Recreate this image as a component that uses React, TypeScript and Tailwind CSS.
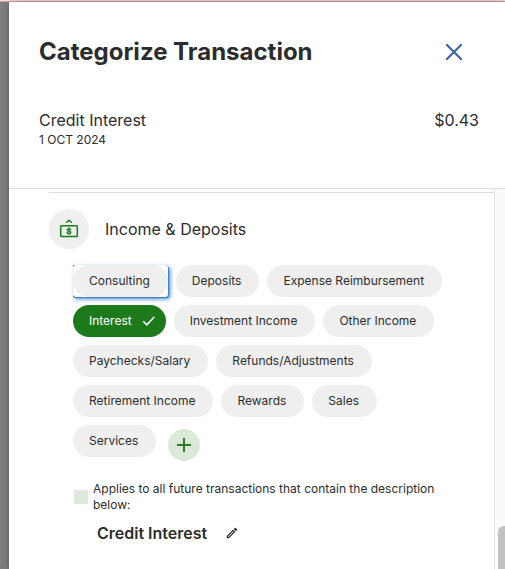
import { useState } from "react";

const categories = [
  "Consulting",
  "Deposits",
  "Expense Reimbursement",
  "Interest",
  "Investment Income",
  "Other Income",
  "Paychecks/Salary",
  "Refunds/Adjustments",
  "Retirement Income",
  "Rewards",
  "Sales",
  "Services",
];

function CloseIcon() {
  return (
    <svg width="16" height="16" viewBox="0 0 16 16" fill="none" stroke="#3c67a8" strokeWidth="2.2" strokeLinecap="round" aria-hidden="true">
      <path d="M1 1l14 14M15 1L1 15" />
    </svg>
  );
}

function IncomeIcon() {
  return (
    <svg width="20" height="20" viewBox="0 0 20 20" fill="none" stroke="#1d7a1b" strokeWidth="1.5" strokeLinecap="round" strokeLinejoin="round" aria-hidden="true">
      <path d="M7.7 3.3L10 1.2 12.3 3.3" />
      <rect x="1.7" y="6.7" width="16.6" height="10.9" rx="0.8" />
      <path d="M11.7 10.8c-.2-.6-.8-.9-1.7-.9-1 0-1.7.4-1.7 1.1 0 1.6 3.5.7 3.5 2.3 0 .7-.8 1.1-1.8 1.1s-1.7-.4-1.9-1M10 9v.8M10 14.5v.8" />
    </svg>
  );
}

function CheckIcon() {
  return (
    <svg width="14" height="12" viewBox="0 0 14 12" fill="none" stroke="#fff" strokeWidth="1.5" aria-hidden="true">
      <path d="M1.3 6.2L4.8 9.8 12.4 1.8" />
    </svg>
  );
}

function PlusIcon() {
  return (
    <svg width="14" height="14" viewBox="0 0 14 14" fill="none" stroke="#2b7d28" strokeWidth="2" aria-hidden="true">
      <path d="M7 0v14M0 7h14" />
    </svg>
  );
}

function PencilIcon() {
  return (
    <svg width="14" height="14" viewBox="0 0 24 24" fill="#2b2d2d" aria-hidden="true">
      <path d="M14.06 9.02l.92.92L5.92 19H5v-.92l9.06-9.06M17.66 3c-.25 0-.51.1-.7.29l-1.83 1.83 3.75 3.75 1.83-1.83c.39-.39.39-1.02 0-1.41l-2.34-2.34c-.2-.2-.45-.29-.71-.29zm-3.6 3.19L3 17.25V21h3.75L17.81 9.94l-3.75-3.75z" />
    </svg>
  );
}

export default function App() {
  const [selected, setSelected] = useState("Interest");
  const [applyAll, setApplyAll] = useState(false);

  return (
    <div className="flex h-screen flex-col overflow-hidden bg-[#7f7f7f] font-['Inter',sans-serif] text-[#2b2d2d]">
      <div className="h-0.5 shrink-0 border-b border-[#c9a5aa] bg-[#ffdce1]" />
      <main className="ml-[9px] flex min-h-0 grow flex-col bg-white shadow-[0_0_8px_rgba(0,0,0,0.3)]">
        <header className="border-b border-[#dcdcdc] pt-8 pr-[26px] pb-10 pl-[30px]">
          <div className="flex h-9 items-center justify-between">
            <h1 className="text-2xl font-bold">Categorize Transaction</h1>
            <button type="button" aria-label="Close" className="mr-2 flex size-[34px] items-center justify-center">
              <CloseIcon />
            </button>
          </div>
          <div className="mt-[38px] flex justify-between text-base">
            <p>Credit Interest</p>
            <p>$0.43</p>
          </div>
          <p className="text-xs leading-4">1 OCT 2024</p>
        </header>

        <div className="flex min-h-0 grow">
          <section className="min-w-0 grow pt-[3px] pl-10">
            <div className="flex items-center gap-4 border-t border-[#dcdcdc] pt-4">
              <span className="flex size-10 items-center justify-center rounded-full bg-[#efefef]">
                <IncomeIcon />
              </span>
              <h2 className="text-base">Income &amp; Deposits</h2>
            </div>

            <div className="mt-4 flex flex-wrap gap-2 pr-12 pl-6">
              {categories.map((name) => {
                const active = name === selected;
                return (
                  <div
                    key={name}
                    className={
                      name === "Consulting"
                        ? "rounded-r-[3px] bg-[#3c7fcb] shadow-[1px_1px_0_#3c7fcb,2px_2px_4px_#3c7fcb]"
                        : ""
                    }
                  >
                    <div className="rounded-[3px] bg-white">
                      <button
                        type="button"
                        aria-pressed={active}
                        onClick={() => setSelected(name)}
                        className={`flex h-8 items-center gap-2.5 rounded-full pl-4 text-xs ${
                          active ? "bg-[#1d7a1b] pr-2.5 text-white" : "bg-[#efefef] pr-[18px]"
                        }`}
                      >
                        {name}
                        {active && <CheckIcon />}
                      </button>
                    </div>
                  </div>
                );
              })}
              <button
                type="button"
                aria-label="Add category"
                className="mt-1 ml-1 flex size-8 items-center justify-center rounded-full bg-[#dbe8da]"
              >
                <PlusIcon />
              </button>
            </div>

            <div className="mt-5 flex items-center gap-[5px] pr-8 pl-[25px]">
              <input
                id="apply-all"
                type="checkbox"
                checked={applyAll}
                onChange={(event) => setApplyAll(event.target.checked)}
                className="size-3.5 shrink-0 appearance-none bg-[#dbe8da] checked:bg-[#1d7a1b]"
              />
              <label htmlFor="apply-all" className="text-xs leading-4">
                Applies to all future transactions that contain the description below:
              </label>
            </div>

            <div className="mt-2 flex items-center gap-[18px] pl-12">
              <p className="text-base font-semibold">Credit Interest</p>
              <button type="button" aria-label="Edit description">
                <PencilIcon />
              </button>
            </div>
          </section>

          <div className="flex w-[11px] shrink-0 flex-col justify-end border-l border-[#e4e4e4] bg-[#fafafa] pl-[3px]">
            <div className="h-[43px] rounded-tl-md bg-[#c1c1c1]" />
          </div>
        </div>
      </main>
    </div>
  );
}
